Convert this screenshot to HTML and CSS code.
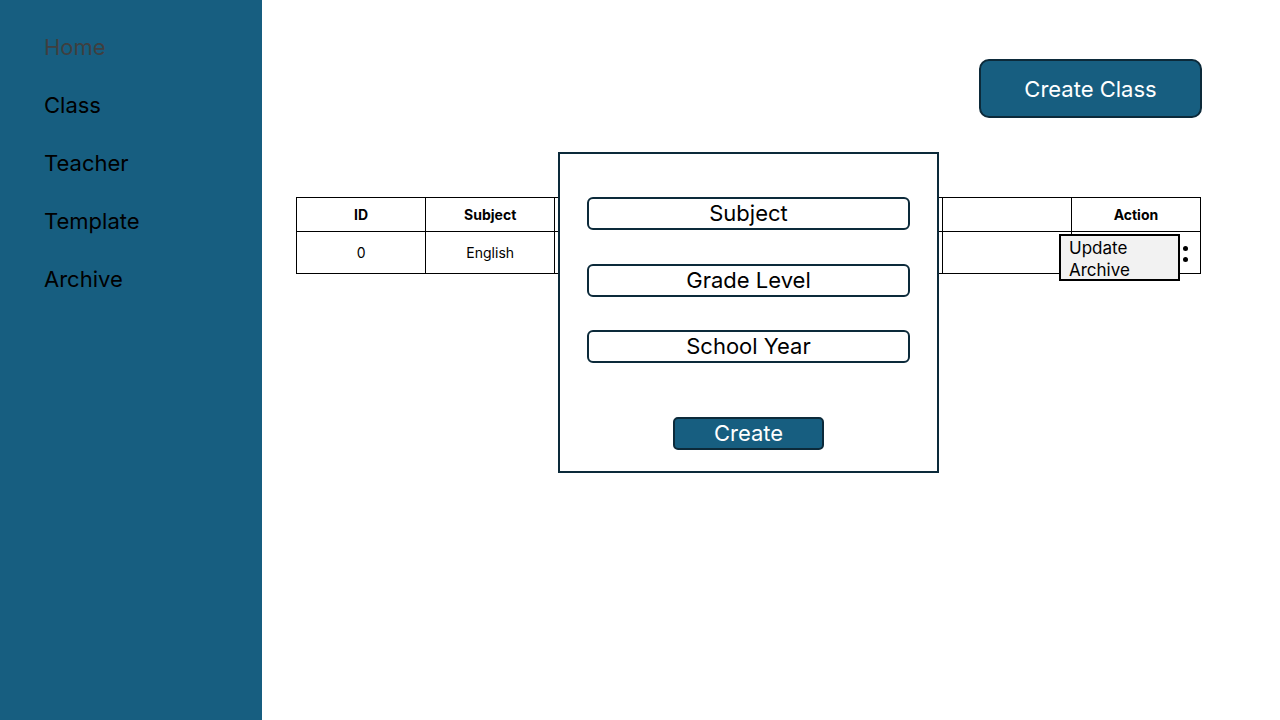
FILE: index.html
```html
<!DOCTYPE html>
<html>
<head>
<meta charset="utf-8">
<link rel="stylesheet" href="styles.css">
</head>
<body>
<div class="app">
  <nav class="sidebar">
    <a class="nav-item muted">Home</a>
    <a class="nav-item">Class</a>
    <a class="nav-item">Teacher</a>
    <a class="nav-item">Template</a>
    <a class="nav-item">Archive</a>
  </nav>
  <main class="main">
    <button class="create-class">Create Class</button>
    <div class="table-wrap">
      <table class="grid">
        <thead>
          <tr><th>ID</th><th>Subject</th><th></th><th></th><th></th><th></th><th>Action</th></tr>
        </thead>
        <tbody>
          <tr><td>0</td><td>English</td><td></td><td></td><td></td><td></td><td class="action-cell"><span class="dots"><i class="dot"></i><i class="dot"></i></span></td></tr>
        </tbody>
      </table>
      <div class="menu">
        <div class="menu-item">Update</div>
        <div class="menu-item">Archive</div>
      </div>
    </div>
    <div class="modal">
      <div class="field">Subject</div>
      <div class="field">Grade Level</div>
      <div class="field">School Year</div>
      <button class="create-btn">Create</button>
    </div>
  </main>
</div>
</body>
</html>
```
FILE: styles.css
```css
* { box-sizing: border-box; }
html, body { margin: 0; padding: 0; }
body {
  font-family: Inter, "Liberation Sans", sans-serif;
  background: #fff;
  width: 1280px;
  height: 720px;
  overflow: hidden;
}
.app { display: flex; height: 720px; }
.sidebar {
  width: 262px;
  background: #175e80;
  display: flex;
  flex-direction: column;
  padding: 33px 0 0 44px;
  gap: 29px;
}
.nav-item {
  font-size: 22px;
  line-height: 29px;
  color: #000;
}
.nav-item.muted { color: #3f3f3f; }
.main {
  flex: 1;
  position: relative;
  display: flex;
  flex-direction: column;
  padding: 59px 79px 0 34px;
}
.create-class {
  align-self: flex-end;
  width: 223px;
  height: 59px;
  margin-right: -1px;
  background: #175e80;
  border: 2px solid #0c2a3a;
  border-radius: 10px;
  color: #fff;
  font-family: inherit;
  font-size: 22px;
}
.table-wrap { position: relative; margin-top: 79px; }
.grid {
  width: 905px;
  border-collapse: collapse;
  table-layout: fixed;
  font-size: 14px;
}
.grid th, .grid td {
  border: 1px solid #000;
  text-align: center;
  padding: 0;
}
.grid th { height: 34px; font-weight: 700; }
.grid td { height: 42px; }
.action-cell { position: relative; }
.dots {
  position: absolute;
  right: 12px;
  top: 14px;
  display: flex;
  flex-direction: column;
  gap: 6px;
}
.dot {
  display: block;
  width: 5px;
  height: 5px;
  border-radius: 50%;
  background: #000;
}
.menu {
  position: absolute;
  left: 763px;
  top: 37px;
  width: 121px;
  height: 47px;
  background: #f2f2f2;
  border: 2px solid #000;
  padding: 1px 0 0 8px;
  font-size: 17px;
  line-height: 22px;
}
.modal {
  position: absolute;
  left: 296px;
  top: 152px;
  width: 381px;
  height: 321px;
  background: #fff;
  border: 2px solid #0c2a3a;
  display: flex;
  flex-direction: column;
  align-items: center;
  padding-top: 43px;
}
.field {
  width: 323px;
  height: 33px;
  border: 2px solid #0c2a3a;
  border-radius: 6px;
  font-size: 22px;
  line-height: 29px;
  text-align: center;
  margin-bottom: 34px;
}
.field:nth-child(2) { margin-bottom: 33px; }
.field:nth-child(3) { margin-bottom: 54px; }
.create-btn {
  width: 151px;
  height: 33px;
  background: #175e80;
  border: 2px solid #0c2a3a;
  border-radius: 5px;
  color: #fff;
  font-family: inherit;
  font-size: 22px;
  line-height: 27px;
  padding: 0;
}
```
